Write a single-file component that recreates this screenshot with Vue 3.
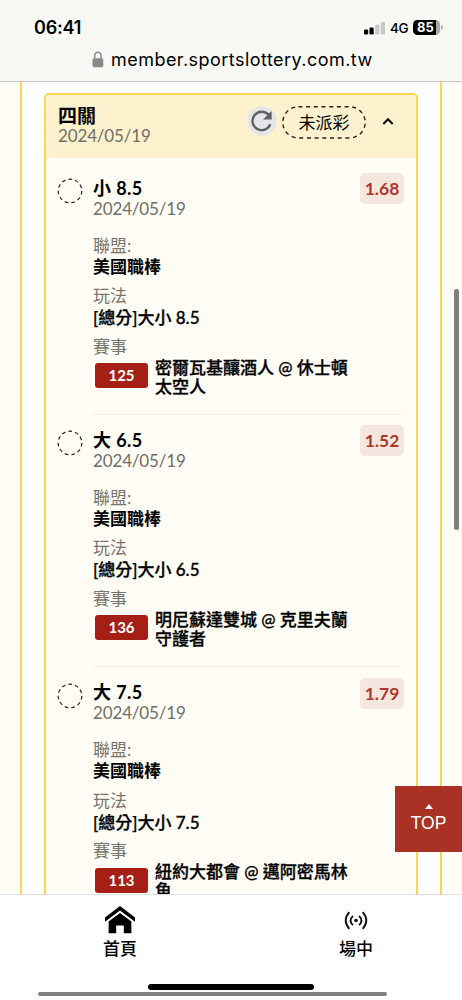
<script setup>
const bets = [
  { pick: '小 8.5', odds: '1.68', play: '[總分]大小 8.5', code: '125', match: ['密爾瓦基釀酒人 @ 休士頓', '太空人'] },
  { pick: '大 6.5', odds: '1.52', play: '[總分]大小 6.5', code: '136', match: ['明尼蘇達雙城 @ 克里夫蘭', '守護者'] },
  { pick: '大 7.5', odds: '1.79', play: '[總分]大小 7.5', code: '113', match: ['紐約大都會 @ 邁阿密馬林', '魚'] },
]
</script>

<template>
  <div class="screen">
    <header class="top">
      <div class="status">
        <span class="clock">06:41</span>
        <div class="signals">
          <svg width="22" height="14" viewBox="0 0 22 14">
            <rect x="0" y="8.6" width="4.2" height="4.8" rx="1.2" fill="#000" />
            <rect x="5.5" y="6.5" width="4.2" height="6.9" rx="1.2" fill="#000" />
            <rect x="11.2" y="3.5" width="4.2" height="9.9" rx="1.2" fill="#c9c9c7" />
            <rect x="16.8" y="0.8" width="4.2" height="12.6" rx="1.2" fill="#c9c9c7" />
          </svg>
          <span class="net">4G</span>
          <span class="battery">85</span>
          <span class="nub"></span>
        </div>
      </div>
      <div class="address">
        <svg width="12" height="17" viewBox="0 0 12 17">
          <path d="M2.7 8V4.8a3.2 3.5 0 0 1 6.4 0V8" fill="none" stroke="#8a8a8d" stroke-width="1.5" />
          <rect x="0.5" y="7.3" width="10.8" height="9" rx="1.6" fill="#8a8a8d" />
        </svg>
        <span>member.sportslottery.com.tw</span>
      </div>
    </header>

    <main class="page">
      <div class="panel">
        <section class="card">
          <div class="card-head">
            <div class="head-text">
              <div class="head-title">四關</div>
              <div class="date">2024/05/19</div>
            </div>
            <svg class="refresh" width="30" height="30" viewBox="0 0 30 30">
              <circle cx="15" cy="15" r="14.7" fill="#e4e5e8" />
              <path d="M23.3 18.2A9.2 9.2 0 1 1 21.8 9" fill="none" stroke="#5f6063" stroke-width="2.4" />
              <path d="M24.6 5v8.6H16z" fill="#5f6063" />
            </svg>
            <div class="pill">
              <svg width="84" height="33" viewBox="0 0 84 33">
                <rect x="0.8" y="0.8" width="82.4" height="31.2" rx="15.6" fill="none" stroke="#26231a" stroke-width="1.4" stroke-dasharray="4 3.7" />
              </svg>
              <span>未派彩</span>
            </div>
            <svg class="chev" width="12" height="9" viewBox="0 0 12 9">
              <path d="M1.3 7 6 2.2 10.7 7" fill="none" stroke="#111" stroke-width="2.1" />
            </svg>
          </div>

          <article v-for="b in bets" :key="b.code" class="bet">
            <svg class="ring" width="26" height="26" viewBox="0 0 26 26">
              <circle cx="13" cy="13" r="11.8" fill="none" stroke="#222" stroke-width="1.2" stroke-dasharray="3.7 3" />
            </svg>
            <div class="info">
              <div class="bet-top">
                <div>
                  <div class="pick">{{ b.pick }}</div>
                  <div class="date">2024/05/19</div>
                </div>
                <span class="odds">{{ b.odds }}</span>
              </div>
              <div class="field">
                <div class="label">聯盟:</div>
                <div class="value league">美國職棒</div>
              </div>
              <div class="field">
                <div class="label">玩法</div>
                <div class="value play">{{ b.play }}</div>
              </div>
              <div class="label">賽事</div>
              <div class="game">
                <span class="code">{{ b.code }}</span>
                <div class="match"><div v-for="m in b.match" :key="m">{{ m }}</div></div>
              </div>
              <div class="rule"></div>
            </div>
          </article>
        </section>
      </div>
      <div class="scroll-v"></div>
      <div class="to-top">
        <span class="tri"></span>
        <span>TOP</span>
      </div>
    </main>

    <nav class="tabs">
      <div class="tab">
        <svg width="30" height="28" viewBox="0 0 30 28">
          <path d="M0 11.6 15 0 30 11.6v4.1L15 4.4 0 15.7z" fill="#000" />
          <path d="M3.6 15.6 15 7l11.4 8.6V27.2h-7.6v-7.8h-7.6v7.8H3.6z" fill="#000" />
        </svg>
        <span>首頁</span>
      </div>
      <div class="tab">
        <svg width="24" height="28" viewBox="0 0 24 28">
          <g fill="none" stroke="#111" stroke-width="1.9">
            <path d="M5.3 6.2Q-1.9 14.5 5.3 22.8M18.7 6.2Q25.9 14.5 18.7 22.8" />
            <path d="M8.9 9.8Q4.3 14.5 8.9 19.2M15.1 9.8Q19.7 14.5 15.1 19.2" />
          </g>
          <circle cx="12" cy="14.5" r="1.8" fill="#111" />
        </svg>
        <span>場中</span>
      </div>
      <div class="home-bar"></div>
      <div class="scroll-h"></div>
    </nav>
  </div>
</template>

<style>
body { margin: 0; overflow: hidden; }
</style>

<style scoped>
* { box-sizing: border-box; }
svg { display: block; flex: none; }
.screen {
  width: 462px; height: 1000px; display: flex; flex-direction: column; overflow: hidden;
  background: #fff; color: #000; font-family: Lato, "Noto Sans CJK TC", sans-serif; font-size: 17px;
}
.top { height: 82px; flex: none; background: #f8f8f4; border-bottom: 1px solid #c6c6c2; font-family: Inter, sans-serif; }
.status { height: 47px; display: flex; justify-content: space-between; align-items: flex-start; padding: 17px 19px 0 34px; }
.clock { font-size: 18px; line-height: 22px; font-weight: 600; letter-spacing: -0.2px; }
.signals { display: flex; align-items: center; height: 21px; }
.net { font-size: 13.5px; margin-left: 4px; font-weight: 500; width: 23px; white-space: nowrap; letter-spacing: -0.4px; }
.battery {
  width: 27px; height: 15px; border-radius: 4.5px; background: linear-gradient(90deg, #000 84%, #aaa 84%);
  color: #fff; font-size: 13px; font-weight: 700; line-height: 15px; padding-left: 4px;
}
.nub { width: 2px; height: 5px; background: #b5b5b3; border-radius: 0 2px 2px 0; margin-left: 1px; }
.address { display: flex; padding-left: 92px; gap: 7px; height: 25px; align-items: center; font-size: 18px; letter-spacing: 0.46px; white-space: nowrap; }
.page { height: 812px; flex: none; position: relative; background: #fffdf5; padding: 0 20px; overflow: hidden; }
.panel { height: 812px; background: #fff; border: solid #f9d84f; border-width: 0 2px; padding: 11px 22px 0 22px; overflow: hidden; }
.card { border: 2px solid #f9d84f; border-radius: 5px; background: #fffdf5; height: 900px; overflow: hidden; }
.card-head { height: 63px; background: #fdf2cd; display: flex; padding: 0 22px 0 12px; }
.head-text { flex: 1; padding-top: 9px; }
.head-title { font-size: 19px; line-height: 23px; height: 22px; font-weight: 700; }
.date { font-size: 17px; line-height: 20px; color: #716e68; letter-spacing: -0.15px; }
.refresh { margin-top: 11px; }
.pill { position: relative; width: 84px; height: 33px; margin: 11px 1px 0 5px; }
.pill span { position: absolute; inset: 0; text-align: center; line-height: 34px; font-size: 17px; }
.chev { margin: 22px 0 0 15px; }
.bet { display: flex; height: 252.3px; padding: 18px 12px 0 11px; }
.ring { margin-top: 2px; }
.info { flex: 1; margin-left: 10px; }
.bet-top { display: flex; justify-content: space-between; height: 58.5px; }
.pick { font-size: 18px; line-height: 22px; font-weight: 700; letter-spacing: 0.4px; margin-top: 0.5px; }
.odds {
  width: 44px; height: 31px; margin-top: -3px; border-radius: 5px; background: #f5e7df;
  color: #ae362a; font-weight: 700; text-align: center; line-height: 31px; font-size: 17.5px;
}
.field { height: 50.5px; }
.label { color: #77746e; line-height: 21px; height: 21px; }
.value { font-weight: 500; line-height: 22px; height: 21px; }
.league { font-weight: 600; }
.play, .match { -webkit-text-stroke: 0.3px #000; }
.play { line-height: 23px; }
.game { display: flex; align-items: center; gap: 7px; padding-left: 2px; height: 37px; margin-top: 0.5px; }
.code {
  width: 53px; height: 25px; border-radius: 3px; background: #a51f17; color: #fff; text-align: center;
  line-height: 25px; font-size: 15px; font-weight: 700;
}
.match { font-weight: 500; line-height: 18.7px; white-space: nowrap; padding-top: 4px; }
.match div { height: 18.7px; }
.rule { height: 1.5px; margin: 19.5px 2px 0 0; background: #efede7; }
.scroll-v { position: absolute; right: 3px; top: 207px; width: 5px; height: 241px; border-radius: 3px; background: #7f7f7b; }
.to-top {
  position: absolute; right: 0; top: 704px; width: 67px; height: 66px; background: #a93225; color: #fff;
  display: flex; flex-direction: column; align-items: center; font: 17.5px/22px "Liberation Sans", sans-serif;
}
.tri { margin: 18px 0 3px; border: solid transparent; border-width: 0 4px 5px; border-bottom-color: #fff; }
.tabs { height: 106px; flex: none; border-top: 1px solid #dededd; background: #fff; display: flex; position: relative; padding: 11px 0 0 2px; }
.tab { width: 236px; display: flex; flex-direction: column; align-items: center; font-weight: 500; font-size: 17px; line-height: 29px; flex: none; }
.home-bar { position: absolute; left: 148px; top: 89px; width: 166px; height: 6px; border-radius: 3px; background: #000; }
.scroll-h { position: absolute; left: 38px; top: 97px; width: 349px; height: 4px; border-radius: 2px; background: #808080; }
</style>
